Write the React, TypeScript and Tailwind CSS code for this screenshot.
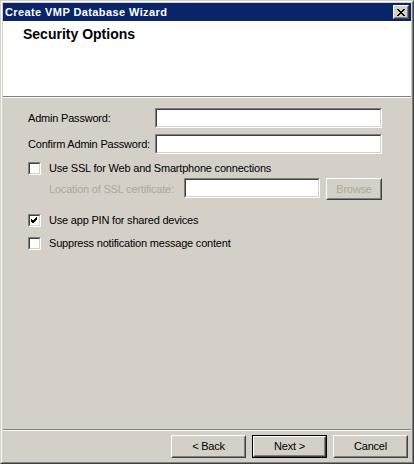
const sunken =
  "border border-t-[#808080] border-l-[#808080] border-b-white border-r-white";
const sunkenInner =
  "border border-t-[#404040] border-l-[#404040] border-b-[#d4d0c8] border-r-[#d4d0c8] bg-white";

const Field = ({ w }: { w: string }) => (
  <div className={`${sunken} ${w} h-[20px]`}>
    <div className={`${sunkenInner} h-full w-full`} />
  </div>
);

const CheckBox = ({ checked }: { checked?: boolean }) => (
  <div className={`${sunken} h-[13px] w-[13px] shrink-0`}>
    <div className={`${sunkenInner} flex h-full w-full items-center justify-center`}>
      {checked && (
        <svg width="7" height="7" viewBox="0 0 7 7">
          <path d="M0 2 L2 4 L6 0 M0 3 L2 5 L6 1 M0 4 L2 6 L6 2" stroke="#000" strokeWidth="1" fill="none" shapeRendering="crispEdges" />
        </svg>
      )}
    </div>
  </div>
);

const Button = ({ label, primary, disabled, className = "" }: { label: string; primary?: boolean; disabled?: boolean; className?: string }) => {
  const inner = (
    <div className="h-full w-full border border-t-white border-l-white border-b-[#404040] border-r-[#404040]">
      <div
        className={`flex h-full w-full items-center justify-center border border-t-[#d4d0c8] border-l-[#d4d0c8] border-b-[#808080] border-r-[#808080] text-[11px] tracking-[-0.2px] ${
          disabled ? "text-[#aca899]" : "text-black"
        }`}
      >
        {label}
      </div>
    </div>
  );
  return primary ? (
    <div className={`border border-black ${className}`}>{inner}</div>
  ) : (
    <div className={className}>{inner}</div>
  );
};

export default function App() {
  return (
    <div
      className="h-[464px] w-[414px] bg-[#d4d0c8] border border-t-[#d4d0c8] border-l-[#d4d0c8] border-b-[#404040] border-r-[#404040]"
      style={{ fontFamily: '"Liberation Sans", Arial, sans-serif' }}
    >
      <div className="flex h-full w-full flex-col border border-t-white border-l-white border-b-[#808080] border-r-[#808080]">
        <div className="flex h-full w-full flex-col p-px">
          {/* title bar */}
          <div className="flex h-[18px] items-center justify-between bg-[#0a246a] pl-[2px] pr-[2px]">
            <span className="text-[11px] font-bold tracking-[0.4px] text-white">Create VMP Database Wizard</span>
            <div className="h-[14px] w-[16px] border border-t-white border-l-white border-b-[#404040] border-r-[#404040] bg-[#d4d0c8]">
              <div className="flex h-full w-full items-center justify-center border border-t-[#d4d0c8] border-l-[#d4d0c8] border-b-[#808080] border-r-[#808080]">
                <svg width="8" height="7" viewBox="0 0 8 7">
                  <path d="M0.5 0 L7.5 7 M1.5 0 L8.5 7 M7.5 0 L0.5 7 M8.5 0 L1.5 7" stroke="#000" strokeWidth="1" fill="none" transform="translate(-0.5 0)" />
                </svg>
              </div>
            </div>
          </div>

          {/* header */}
          <div className="h-[75px] bg-white pl-[20px] pt-[3px]">
            <h1 className="text-[14px] font-bold text-black">Security Options</h1>
          </div>
          <div className="h-px bg-[#808080]" />
          <div className="h-px bg-white" />

          {/* body */}
          <div className="flex flex-1 flex-col pl-[25px] pt-[10px] text-[11px] tracking-[-0.2px] text-black">
            <div className="flex items-center">
              <span className="w-[127px]">Admin Password:</span>
              <Field w="w-[227px]" />
            </div>
            <div className="mt-[6px] flex items-center">
              <span className="w-[127px]">Confirm Admin Password:</span>
              <Field w="w-[227px]" />
            </div>
            <div className="mt-[8px] flex h-[13px] items-center gap-[8px]">
              <CheckBox />
              <span>Use SSL for Web and Smartphone connections</span>
            </div>
            <div className="mt-[3px] flex items-start pl-[21px]">
              <span className="mt-[3px] w-[135px] text-[#aca899]">Location of SSL certificate:</span>
              <Field w="w-[136px]" />
              <Button label="Browse" disabled className="ml-[6px] h-[22px] w-[56px]" />
            </div>
            <div className="mt-[14px] flex h-[13px] items-center gap-[8px]">
              <CheckBox checked />
              <span>Use app PIN for shared devices</span>
            </div>
            <div className="mt-[10px] flex h-[13px] items-center gap-[8px]">
              <CheckBox />
              <span>Suppress notification message content</span>
            </div>
          </div>

          <div className="h-px bg-[#808080]" />
          <div className="h-px bg-white" />

          {/* buttons */}
          <div className="flex h-[30px] items-start justify-end gap-[6px] pr-[3px] pt-[4px]">
            <Button label="< Back" className="h-[23px] w-[75px]" />
            <Button label="Next >" primary className="h-[23px] w-[75px]" />
            <Button label="Cancel" className="h-[23px] w-[75px]" />
          </div>
        </div>
      </div>
    </div>
  );
}
